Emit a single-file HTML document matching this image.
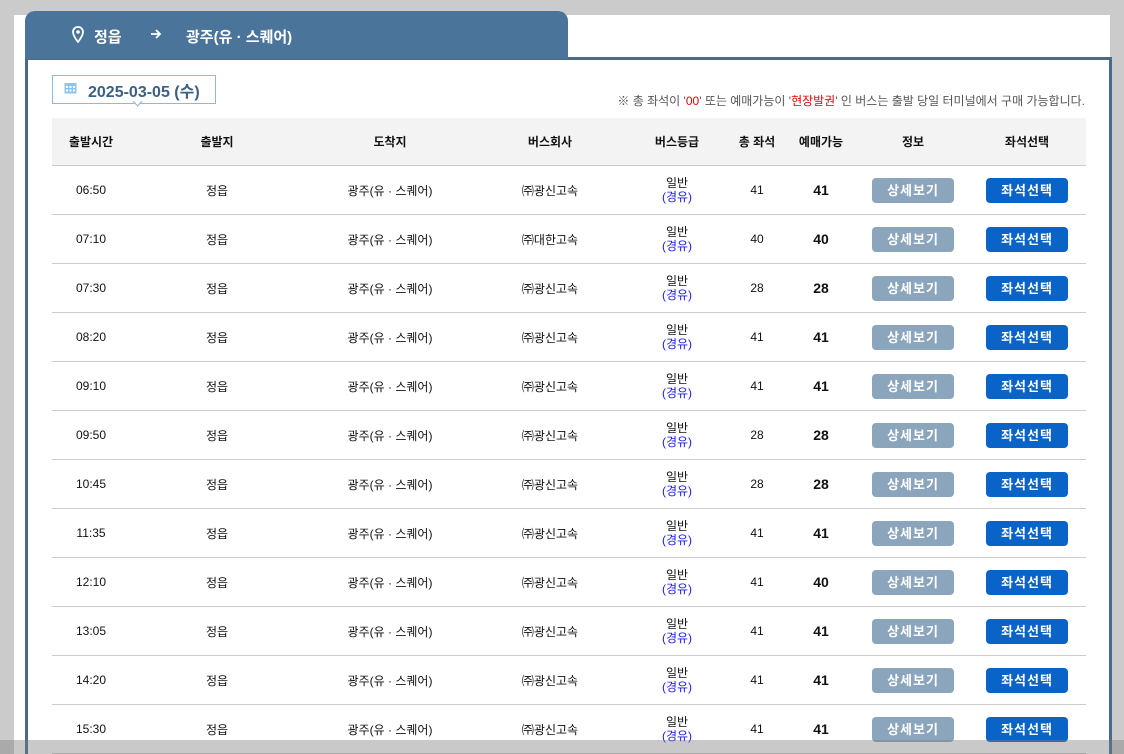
<!DOCTYPE html><html><head><meta charset="utf-8"><style>
html,body{margin:0;width:1124px;height:754px;overflow:hidden;}
body{background:#cbcbcb;position:relative;font-family:"Liberation Sans","Noto Sans CJK KR",sans-serif;}
.panel{position:absolute;left:14px;top:15px;width:1096px;height:740px;background:#fff;}
.tab{position:absolute;left:25px;top:11px;width:543px;height:48px;background:#4a7499;border-radius:10px 10px 0 0;color:#fff;font-weight:bold;font-size:15px;}
.box{position:absolute;left:25px;top:57px;width:1081px;height:720px;border:3px solid #4a6a8a;border-bottom:none;}
.tab span{position:absolute;top:15px;}
.date{position:absolute;left:52px;top:75px;width:162px;height:27px;border:1px solid #8bb8e0;background:#fff;color:#3c6084;font-weight:bold;font-size:16px;}
.tri{position:absolute;left:81px;top:22px;width:6px;height:6px;background:#fff;border-right:1px solid #8bb8e0;border-bottom:1px solid #8bb8e0;transform:rotate(45deg);}
.note{position:absolute;right:39px;top:92px;font-size:12px;color:#555;}
table{position:absolute;left:52px;top:118px;width:1034px;border-collapse:collapse;table-layout:fixed;font-size:12px;color:#111;}
th{height:47px;padding:0;background:#f3f3f3;font-weight:bold;font-size:12px;border-bottom:1px solid #ccc;}
td{height:48px;text-align:center;border-bottom:1px solid #ccc;padding:0;}
.g{line-height:14px;} .g span{color:#1a1aee;}
.b{font-weight:bold;font-size:14px;}
.btn{display:inline-block;width:82px;height:25px;line-height:25px;border-radius:4px;color:#fff;font-size:13px;font-weight:bold;letter-spacing:1px;}
.d{background:#8ba5bd;} .s{background:#0a64c8;}
.ov{position:absolute;left:0;top:740px;width:1124px;height:14px;background:rgba(120,120,120,0.4);}
</style></head><body>
<div class="panel"></div>
<div class="box"></div>
<div class="tab">
<svg style="position:absolute;left:47px;top:15px" width="12" height="17" viewBox="0 0 12 17"><path d="M6 1C3 1 1 3.2 1 6c0 3.5 5 10 5 10s5-6.5 5-10c0-2.8-2-5-5-5z" fill="none" stroke="#fff" stroke-width="1.8"/><circle cx="6" cy="6" r="1.8" fill="#fff"/></svg>
<span style="left:69px;">정읍</span>
<svg style="position:absolute;left:125px;top:18px" width="12" height="10" viewBox="0 0 12 10"><path d="M1 5h9M6 1l4 4-4 4" fill="none" stroke="#fff" stroke-width="1.8"/></svg>
<span style="left:161px;">광주(유 · 스퀘어)</span>
</div>
<div class="date"><svg style="position:absolute;left:11px;top:6px" width="13" height="12" viewBox="0 0 13 12"><rect x="0.5" y="1" width="12" height="10.5" fill="#8bc4ee"/><g fill="#fff"><rect x="2" y="4" width="2" height="2"/><rect x="5.5" y="4" width="2" height="2"/><rect x="9" y="4" width="2" height="2"/><rect x="2" y="7.5" width="2" height="2"/><rect x="5.5" y="7.5" width="2" height="2"/><rect x="9" y="7.5" width="2" height="2"/></g></svg><span style="position:absolute;left:35px;top:2px;">2025-03-05 (수)</span><div class="tri"></div></div>
<div class="note">※ 총 좌석이 '<span style="color:#e00">00</span>' 또는 예매가능이 '<span style="color:#e00">현장발권</span>' 인 버스는 출발 당일 터미널에서 구매 가능합니다.</div>
<table>
<colgroup><col style="width:78px"><col style="width:174px"><col style="width:172px"><col style="width:148px"><col style="width:106px"><col style="width:54px"><col style="width:74px"><col style="width:110px"><col style="width:118px"></colgroup>
<tr><th>출발시간</th><th>출발지</th><th>도착지</th><th>버스회사</th><th>버스등급</th><th>총 좌석</th><th>예매가능</th><th>정보</th><th>좌석선택</th></tr>
<tr><td>06:50</td><td>정읍</td><td>광주(유 · 스퀘어)</td><td>㈜광신고속</td><td class="g">일반<br><span>(경유)</span></td><td>41</td><td class="b">41</td><td><span class="btn d">상세보기</span></td><td><span class="btn s">좌석선택</span></td></tr>
<tr><td>07:10</td><td>정읍</td><td>광주(유 · 스퀘어)</td><td>㈜대한고속</td><td class="g">일반<br><span>(경유)</span></td><td>40</td><td class="b">40</td><td><span class="btn d">상세보기</span></td><td><span class="btn s">좌석선택</span></td></tr>
<tr><td>07:30</td><td>정읍</td><td>광주(유 · 스퀘어)</td><td>㈜광신고속</td><td class="g">일반<br><span>(경유)</span></td><td>28</td><td class="b">28</td><td><span class="btn d">상세보기</span></td><td><span class="btn s">좌석선택</span></td></tr>
<tr><td>08:20</td><td>정읍</td><td>광주(유 · 스퀘어)</td><td>㈜광신고속</td><td class="g">일반<br><span>(경유)</span></td><td>41</td><td class="b">41</td><td><span class="btn d">상세보기</span></td><td><span class="btn s">좌석선택</span></td></tr>
<tr><td>09:10</td><td>정읍</td><td>광주(유 · 스퀘어)</td><td>㈜광신고속</td><td class="g">일반<br><span>(경유)</span></td><td>41</td><td class="b">41</td><td><span class="btn d">상세보기</span></td><td><span class="btn s">좌석선택</span></td></tr>
<tr><td>09:50</td><td>정읍</td><td>광주(유 · 스퀘어)</td><td>㈜광신고속</td><td class="g">일반<br><span>(경유)</span></td><td>28</td><td class="b">28</td><td><span class="btn d">상세보기</span></td><td><span class="btn s">좌석선택</span></td></tr>
<tr><td>10:45</td><td>정읍</td><td>광주(유 · 스퀘어)</td><td>㈜광신고속</td><td class="g">일반<br><span>(경유)</span></td><td>28</td><td class="b">28</td><td><span class="btn d">상세보기</span></td><td><span class="btn s">좌석선택</span></td></tr>
<tr><td>11:35</td><td>정읍</td><td>광주(유 · 스퀘어)</td><td>㈜광신고속</td><td class="g">일반<br><span>(경유)</span></td><td>41</td><td class="b">41</td><td><span class="btn d">상세보기</span></td><td><span class="btn s">좌석선택</span></td></tr>
<tr><td>12:10</td><td>정읍</td><td>광주(유 · 스퀘어)</td><td>㈜광신고속</td><td class="g">일반<br><span>(경유)</span></td><td>41</td><td class="b">40</td><td><span class="btn d">상세보기</span></td><td><span class="btn s">좌석선택</span></td></tr>
<tr><td>13:05</td><td>정읍</td><td>광주(유 · 스퀘어)</td><td>㈜광신고속</td><td class="g">일반<br><span>(경유)</span></td><td>41</td><td class="b">41</td><td><span class="btn d">상세보기</span></td><td><span class="btn s">좌석선택</span></td></tr>
<tr><td>14:20</td><td>정읍</td><td>광주(유 · 스퀘어)</td><td>㈜광신고속</td><td class="g">일반<br><span>(경유)</span></td><td>41</td><td class="b">41</td><td><span class="btn d">상세보기</span></td><td><span class="btn s">좌석선택</span></td></tr>
<tr><td>15:30</td><td>정읍</td><td>광주(유 · 스퀘어)</td><td>㈜광신고속</td><td class="g">일반<br><span>(경유)</span></td><td>41</td><td class="b">41</td><td><span class="btn d">상세보기</span></td><td><span class="btn s">좌석선택</span></td></tr>
</table>
<div class="ov"></div>
</body></html>
